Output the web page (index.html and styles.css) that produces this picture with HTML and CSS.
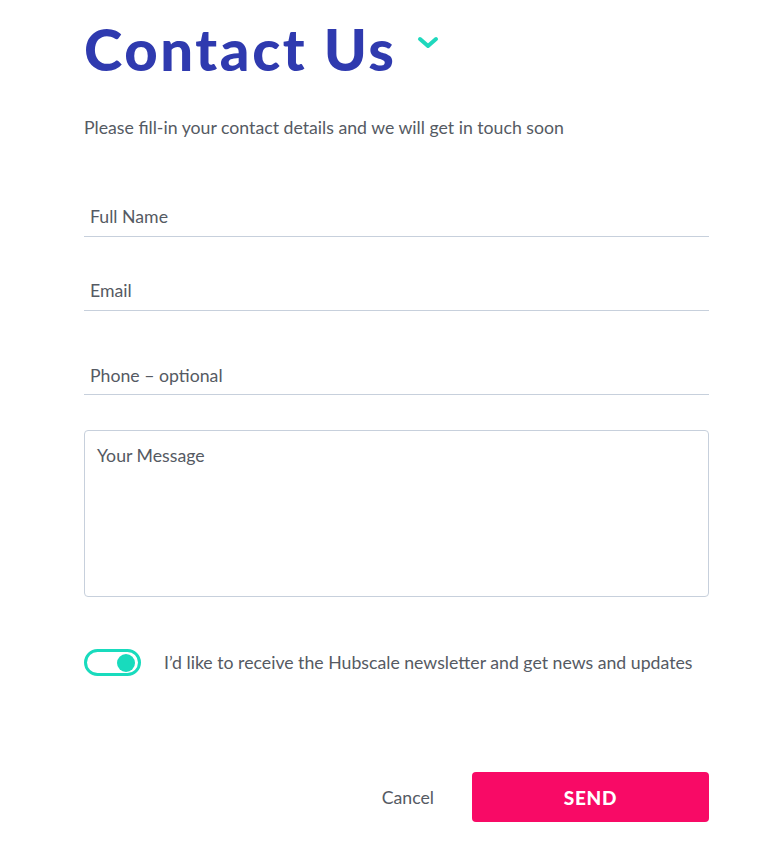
FILE: index.html
```html
<!DOCTYPE html>
<html>
<head>
<meta charset="utf-8">
<link rel="stylesheet" href="styles.css">
</head>
<body>
<main class="page">
  <header class="title-row">
    <h1 class="title">Contact Us</h1>
    <svg class="chevron" width="22" height="14" viewBox="0 0 22 14"><path d="M3 3 L11 10 L19 3" fill="none" stroke="#1fd8bd" stroke-width="4" stroke-linecap="round" stroke-linejoin="round"/></svg>
  </header>
  <p class="intro">Please fill-in your contact details and we will get in touch soon</p>
  <form class="form">
    <div class="field f-name"><span class="ph">Full Name</span></div>
    <div class="field f-email"><span class="ph">Email</span></div>
    <div class="field f-phone"><span class="ph">Phone – optional</span></div>
    <div class="message"><span class="ph">Your Message</span></div>
    <div class="opt">
      <span class="toggle"><span class="knob"></span></span>
      <span class="opt-label">I’d like to receive the Hubscale newsletter and get news and updates</span>
    </div>
    <div class="actions">
      <span class="cancel">Cancel</span>
      <span class="send">SEND</span>
    </div>
  </form>
</main>
</body>
</html>
```

FILE: styles.css
```css
* { box-sizing: border-box; }
html, body { margin: 0; background: #fff; }
body { font-family: Lato, "Liberation Sans", sans-serif; color: #555a63; }
.page { width: 625px; margin-left: 84px; padding-top: 12px; }
.title-row { display: flex; align-items: flex-start; }
.title {
  margin: 0;
  font-family: Lato, sans-serif;
  font-weight: 900;
  font-size: 58px;
  line-height: 74px;
  color: #2f3aaf;
  letter-spacing: 2.6px;
}
.chevron { margin-left: 20px; margin-top: 24px; }
.intro { margin: 31px 0 0; font-size: 17.7px; line-height: 22px; }
.form { display: flex; flex-direction: column; }
.field {
  border-bottom: 1px solid #c7d0dc;
  padding-left: 6px;
  font-size: 17.7px;
  line-height: 22px;
}
.f-name { margin-top: 67px; padding-bottom: 8px; }
.f-email { margin-top: 43px; padding-bottom: 8px; }
.f-phone { margin-top: 54px; padding-bottom: 7px; }
.message {
  margin-top: 35px;
  height: 167px;
  border: 1px solid #c7d0dc;
  border-radius: 4px;
  padding: 14px 12px;
  font-size: 17.7px;
  line-height: 22px;
}
.opt { display: flex; align-items: center; margin-top: 52px; }
.toggle {
  width: 57px; height: 27px;
  border: 3px solid #18dbbd;
  border-radius: 14px;
  display: flex; align-items: center; justify-content: flex-end;
  padding-right: 3px;
}
.knob { width: 18px; height: 18px; border-radius: 50%; background: #18dbbd; }
.opt-label { margin-left: 23px; font-size: 17.7px; line-height: 22px; }
.actions { display: flex; justify-content: flex-end; align-items: center; margin-top: 96px; }
.cancel { font-size: 17.7px; margin-right: 38px; }
.send {
  width: 237px; height: 50px;
  background: #f80a66;
  border-radius: 4px;
  color: #fff;
  font-weight: 900;
  font-size: 19px;
  letter-spacing: 0.8px;
  display: flex; align-items: center; justify-content: center;
}
```
